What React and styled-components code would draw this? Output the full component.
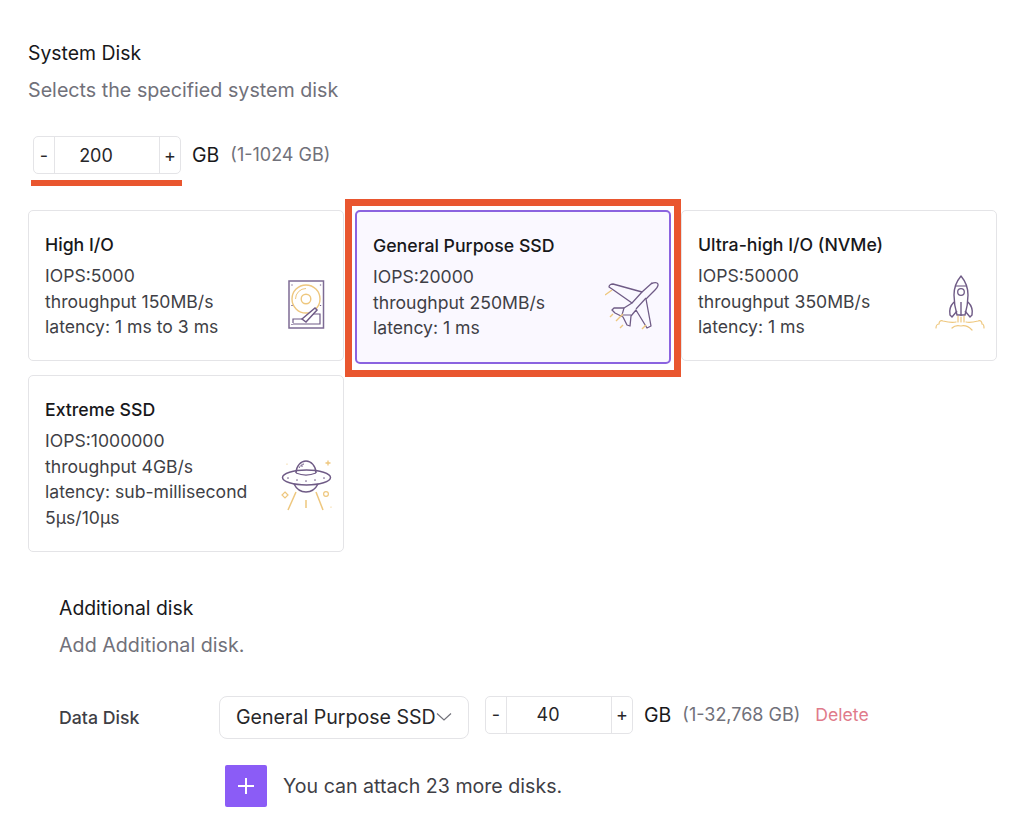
import React from "react";
import styled, { createGlobalStyle } from "styled-components";

const GlobalStyle = createGlobalStyle`
  html, body {
    margin: 0;
    padding: 0;
    background: #fff;
    font-family: Inter, "Liberation Sans", sans-serif;
    color: #18181b;
  }
`;

const cards = [
  { title: "High I/O", lines: ["IOPS:5000", "throughput 150MB/s", "latency: 1 ms to 3 ms"], Icon: DiskIcon, right: 18, bottom: 31 },
  { title: "General Purpose SSD", lines: ["IOPS:20000", "throughput 250MB/s", "latency: 1 ms"], Icon: PlaneIcon, selected: true, right: 10, bottom: 30 },
  { title: "Ultra-high I/O (NVMe)", lines: ["IOPS:50000", "throughput 350MB/s", "latency: 1 ms"], Icon: RocketIcon, right: 11, bottom: 29 },
  { title: "Extreme SSD", lines: ["IOPS:1000000", "throughput 4GB/s", "latency: sub-millisecond 5µs/10µs"], Icon: UfoIcon, right: 8, bottom: 37 },
];

const PURPLE = "#6f5b86";
const GOLD = "#eec77e";

function DiskIcon() {
  return (
    <svg width="37" height="49" viewBox="0 0 37 49" fill="none">
      <rect x="1" y="1" width="34.5" height="47" stroke="#7d6b94" strokeWidth="1.5" />
      <circle cx="18" cy="19" r="14" stroke={GOLD} strokeWidth="1.4" />
      <path d="M7.5 19a10.5 10.5 0 0 1 10.5-10.5" stroke={GOLD} strokeWidth="1" />
      <circle cx="18" cy="19" r="4.8" stroke={GOLD} strokeWidth="1.4" />
      <path d="M5 43v-4h10l8-5h9v10H5" stroke={PURPLE} strokeWidth="1.2" />
      <path d="M14 39l13-11 2 2-11 12z" fill="#fff" stroke={PURPLE} strokeWidth="1.5" />
      <path d="M4 4.5v1M32.5 4.5v1M4 25v1M32.5 25v1M4 44v1" stroke={PURPLE} strokeWidth="1.3" />
    </svg>
  );
}

function PlaneIcon() {
  return (
    <svg width="54" height="52" viewBox="-1 0 54 52" fill="none">
      <path
        d="M46 3L36 12 7 4C5 4 3 5 3 7l3 2 20 14-8 5-10 0-2 2 3 3 6 3 2 1 4 8 3 1 1-10 5-6 11 18 4-2-5-27 9-9c3-3 4-6 2-7-2-1-4 0-6 1z"
        stroke={PURPLE}
        strokeWidth="1.3"
        strokeLinejoin="round"
      />
      <path d="M36 12L26 23M40 18L30 29M18 28l-2 7M16 35l9 0" stroke={PURPLE} strokeWidth="1.2" />
      <path d="M-1 15l7-5M4 37l3-3M10 41l7-7M14 48l3-3M36 49l4-4" stroke={GOLD} strokeWidth="1.4" />
    </svg>
  );
}

function RocketIcon() {
  return (
    <svg width="50" height="56" viewBox="0 0 50 56" fill="none">
      <path
        d="M26 1c-5 6-7 12-7 19 0 7 1 13 3 20h8c2-7 3-13 3-20 0-7-2-13-7-19z"
        stroke={PURPLE}
        strokeWidth="1.4"
        strokeLinejoin="round"
      />
      <path d="M21 11h10" stroke={PURPLE} strokeWidth="1.1" />
      <circle cx="26" cy="17" r="3.3" stroke={PURPLE} strokeWidth="1.3" />
      <path
        d="M19 27c-3 3-5 8-4 13l2 2 5-6M33 27c3 3 5 8 4 13l-2 2-5-6M26 27v14"
        stroke={PURPLE}
        strokeWidth="1.4"
        strokeLinejoin="round"
      />
      <path
        d="M1 53c0-3 2-4 3-4 0-3 2-4 4-3 4 1 9 2 13 1M31 47c4 1 8 0 12-1 2-1 4 0 4 3 1 0 2 1 2 4M17 53c2-2 5-3 9-2 4-1 8 1 11 4M23 41v6M26 42v5M29 41v6"
        stroke={GOLD}
        strokeWidth="1.2"
        strokeLinecap="round"
      />
    </svg>
  );
}

function UfoIcon() {
  return (
    <svg width="54" height="54" viewBox="0 0 54 54" fill="none">
      <path d="M15 13C15 6 20 1 25 1s10 5 10 12" stroke={PURPLE} strokeWidth="1.5" />
      <path d="M18 8c1-2 3-4 5-4" stroke={PURPLE} strokeWidth="1" />
      <ellipse cx="25.5" cy="17.5" rx="24" ry="7.5" stroke={PURPLE} strokeWidth="1.5" />
      <path d="M15 13c6 2.5 14 2.5 20 0" stroke={PURPLE} strokeWidth="1.2" />
      <path d="M13 24c3 6 8 8 12 8s9-2 12-8" stroke={PURPLE} strokeWidth="1.5" />
      <path d="M7 18v.1M16 20v.1M25 21v.1M34 20v.1M43 18v.1M21 6v.1" stroke={PURPLE} strokeWidth="1.6" strokeLinecap="round" />
      <path d="M15 32L7 50M35 32l7 18M25 40v8" stroke={GOLD} strokeWidth="1.5" />
      <path d="M4 32l3 3-3 3-3-3z" stroke={GOLD} strokeWidth="1.2" />
      <circle cx="45" cy="34" r="2.4" stroke={GOLD} strokeWidth="1.2" />
      <path d="M47 0.5v5M44.5 3h5" stroke={GOLD} strokeWidth="1.3" />
      <path d="M6 4v.1M50 47v.1" stroke={GOLD} strokeWidth="1.2" strokeLinecap="round" />
    </svg>
  );
}

function Stepper({ value }) {
  return (
    <StepperBox>
      <StepButton>-</StepButton>
      <StepValue>{value}</StepValue>
      <StepButton>+</StepButton>
    </StepperBox>
  );
}

function App() {
  return (
    <Page>
      <GlobalStyle />
      <SectionTitle>System Disk</SectionTitle>
      <SectionHint>Selects the specified system disk</SectionHint>
      <SizeRow>
        <Stepper value="200" />
        <Unit>GB</Unit>
        <Range>(1-1024 GB)</Range>
        <Underline />
      </SizeRow>
      <CardGrid>
        {cards.map(({ title, lines, Icon, selected, right, bottom }) => (
          <Card key={title} $selected={selected}>
            <CardTitle>{title}</CardTitle>
            {lines.map((line) => (
              <CardLine key={line}>{line}</CardLine>
            ))}
            <CardIcon $right={right} $bottom={bottom}>
              <Icon />
            </CardIcon>
            {selected && <Highlight />}
          </Card>
        ))}
      </CardGrid>
      <Additional>
        <SectionTitle>Additional disk</SectionTitle>
        <SectionHint>Add Additional disk.</SectionHint>
        <DiskRow>
          <DiskLabel>Data Disk</DiskLabel>
          <DiskSelect>
            <SelectText>General Purpose SSD</SelectText>
            <svg width="16" height="10" viewBox="0 0 16 10" fill="none">
              <path d="M1 1.5l7 6.5 7-6.5" stroke="#71717a" strokeWidth="1.2" />
            </svg>
          </DiskSelect>
          <Stepper value="40" />
          <Unit>GB</Unit>
          <Range>(1-32,768 GB)</Range>
          <DeleteLink>Delete</DeleteLink>
        </DiskRow>
        <AttachRow>
          <AddButton>
            <svg width="18" height="18" viewBox="0 0 18 18" fill="none">
              <path d="M9 1v16M1 9h16" stroke="#fff" strokeWidth="2" />
            </svg>
          </AddButton>
          <AttachText>You can attach 23 more disks.</AttachText>
        </AttachRow>
      </Additional>
    </Page>
  );
}

const Page = styled.div`
  box-sizing: border-box;
  width: 1024px;
  height: 840px;
  padding: 42px 26px 0 28px;
  overflow: hidden;
`;

const SectionTitle = styled.div`
  font-size: 19.4px;
  line-height: 22px;
  color: #18181b;
`;

const SectionHint = styled.div`
  margin-top: 14px;
  font-size: 19.7px;
  line-height: 24px;
  color: #71717a;
`;

const SizeRow = styled.div`
  position: relative;
  display: flex;
  align-items: center;
  margin: 34px 0 0 5px;
`;

const Underline = styled.div`
  position: absolute;
  left: -2px;
  top: 44px;
  width: 151px;
  height: 6px;
  background: #e9562f;
`;

const StepperBox = styled.div`
  display: flex;
  box-sizing: border-box;
  width: 148px;
  height: 38px;
  border: 1px solid #e4e4e7;
  border-radius: 5px;
  background: #fff;
`;

const StepButton = styled.div`
  width: 20px;
  display: flex;
  align-items: center;
  justify-content: center;
  font-size: 18px;
  color: #27272a;
`;

const StepValue = styled.div`
  flex: 1;
  display: flex;
  align-items: center;
  justify-content: center;
  padding-right: 22px;
  border-left: 1px solid #e4e4e7;
  border-right: 1px solid #e4e4e7;
  font-size: 18px;
  color: #27272a;
`;

const Unit = styled.span`
  margin-left: 11px;
  font-size: 19.5px;
  line-height: 38px;
  color: #18181b;
`;

const Range = styled.span`
  margin-left: 11px;
  font-size: 18px;
  line-height: 38px;
  color: #71717a;
`;

const CardGrid = styled.div`
  display: flex;
  flex-wrap: wrap;
  align-items: flex-start;
  gap: 11px;
  margin-top: 36px;
`;

const Card = styled.div`
  position: relative;
  box-sizing: border-box;
  width: 316px;
  height: ${(p) => (p.$selected ? "154px" : "auto")};
  padding: ${(p) => (p.$selected ? "23px 16px" : "23px 16px 20.5px")};
  border: ${(p) => (p.$selected ? "2px solid #8b63e0" : "1px solid #e4e4e7")};
  border-radius: 5px;
  background: ${(p) => (p.$selected ? "#faf8ff" : "#fff")};

  &:nth-child(3) {
    margin-left: -1px;
  }
`;

const CardTitle = styled.div`
  margin-bottom: 7px;
  font-size: 17.7px;
  line-height: 22px;
  font-weight: 500;
  color: #18181b;
`;

const CardLine = styled.div`
  width: 220px;
  font-size: 17.6px;
  line-height: 25.5px;
  color: #3f3f46;
`;

const CardIcon = styled.div`
  position: absolute;
  right: ${(p) => p.$right}px;
  bottom: ${(p) => p.$bottom}px;
  display: flex;
`;

const Highlight = styled.div`
  position: absolute;
  inset: -13px -12px -15px -12px;
  border: 7px solid #e9562f;
  pointer-events: none;
`;

const Additional = styled.div`
  padding-left: 31px;
  margin-top: 45px;
`;

const DiskRow = styled.div`
  display: flex;
  align-items: flex-start;
  margin-top: 39px;
`;

const DiskLabel = styled.div`
  width: 160px;
  margin-top: 11px;
  font-size: 17.7px;
  line-height: 22px;
  font-weight: 500;
  color: #3f3f46;
`;

const DiskSelect = styled.div`
  box-sizing: border-box;
  display: flex;
  align-items: center;
  width: 250px;
  height: 43px;
  padding-left: 16px;
  margin-right: 16px;
  border: 1px solid #e4e4e7;
  border-radius: 8px;
`;

const SelectText = styled.span`
  font-size: 19.6px;
  white-space: nowrap;
  color: #27272a;
`;

const DeleteLink = styled.span`
  margin-left: 15px;
  font-size: 17.6px;
  line-height: 38px;
  color: #e07a8a;
`;

const AttachRow = styled.div`
  display: flex;
  align-items: center;
  margin: 26px 0 0 166px;
`;

const AddButton = styled.div`
  width: 42px;
  height: 42px;
  display: flex;
  align-items: center;
  justify-content: center;
  border-radius: 2px;
  background: #8b5cf6;
`;

const AttachText = styled.span`
  margin-left: 16px;
  font-size: 19.6px;
  color: #3f3f46;
`;

export default App;
